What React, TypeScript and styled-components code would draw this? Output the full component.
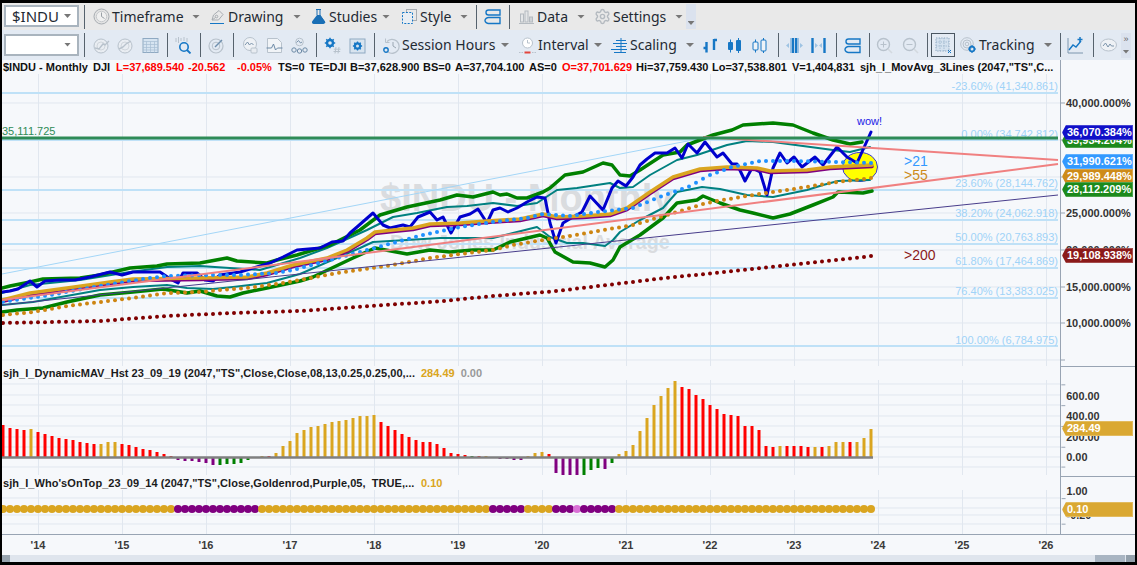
import React from "react";
import styled, { createGlobalStyle } from "styled-components";
import { Settings } from "lucide-react";

const GlobalStyle = createGlobalStyle`
  html, body { margin: 0; padding: 0; background: #000; }
  * { box-sizing: border-box; }
`;

type Pt = [number, number];

const GHOST = "#b8c2cc";
const BLUE = "#1677c5";

// page coordinates, the svg viewBoxes below line up with the page
const CLOSE: Pt[] = [[2,292],[10,291],[18,289],[30,281],[37,287],[45,281],[60,280],[75,280],[90,277],[110,272],[122,275],[133,272],[160,272],[172,280],[178,283],[183,273],[197,273],[205,280],[213,281],[220,275],[240,272],[270,263],[283,257],[297,250],[320,248],[332,242],[343,241],[350,233],[357,227],[373,213],[383,225],[390,228],[403,225],[410,227],[418,217],[430,212],[437,220],[443,217],[451,233],[460,217],[470,214],[478,209],[487,223],[493,210],[500,208],[508,212],[517,208],[527,202],[537,197],[545,198],[550,223],[556,243],[563,223],[573,217],[582,212],[590,196],[603,210],[612,188],[618,181],[626,186],[633,177],[640,165],[647,159],[655,153],[667,153],[675,148],[682,158],[688,144],[697,153],[705,142],[717,157],[723,153],[732,164],[737,164],[745,181],[752,168],[760,172],[767,195],[773,168],[780,153],[787,163],[794,157],[802,167],[815,157],[823,165],[837,147],[847,157],[857,163],[871,132]];
const GOLD: Pt[] = [[2,300],[30,293],[67,288],[110,282],[133,279],[200,278],[247,277],[267,273],[293,265],[327,258],[347,250],[367,238],[375,232],[393,230],[413,228],[430,224],[460,223],[487,221],[520,219],[543,214],[557,217],[583,216],[610,214],[627,208],[650,192],[673,177],[700,169],[727,167],[757,168],[770,171],[807,170],[830,167],[872,165]];
const GREEN_UP: Pt[] = [[2,288],[10,286],[30,282],[43,279],[80,278],[100,275],[130,268],[157,266],[167,264],[200,263],[227,258],[237,261],[267,263],[277,260],[297,255],[330,245],[360,230],[380,215],[407,207],[440,200],[457,195],[473,197],[493,192],[500,195],[507,194],[517,198],[527,198],[543,192],[550,188],[565,175],[583,172],[603,163],[612,165],[620,175],[630,176],[640,170],[663,155],[680,152],[687,145],[713,135],[732,130],[743,125],[757,124],[773,123],[793,125],[813,133],[833,140],[850,144],[862,142]];
const GREEN_LOW: Pt[] = [[2,312],[17,310],[43,308],[67,302],[100,295],[133,292],[163,289],[187,293],[200,291],[217,296],[230,297],[243,293],[267,288],[300,281],[313,277],[353,258],[375,248],[407,254],[430,250],[450,252],[473,250],[493,250],[510,242],[540,235],[547,238],[555,252],[573,262],[590,263],[605,267],[613,260],[620,247],[640,235],[663,218],[677,203],[697,200],[703,196],[720,203],[740,210],[753,213],[773,218],[790,214],[813,205],[833,197],[838,192],[863,193],[872,191]];
const TEAL_UP: Pt[] = [[2,293],[30,285],[80,280],[130,272],[167,267],[200,266],[260,270],[300,258],[327,248],[367,230],[393,217],[417,213],[447,207],[467,206],[493,203],[517,206],[537,203],[557,190],[577,188],[610,183],[620,188],[633,187],[650,175],[677,160],[697,155],[727,145],[747,141],[773,142],[803,146],[833,150],[850,152],[870,147]];
const TEAL_LOW: Pt[] = [[2,305],[33,302],[100,290],[133,287],[167,285],[187,288],[213,289],[233,287],[267,283],[300,274],[360,248],[373,242],[407,240],[440,238],[493,238],[513,233],[537,227],[550,237],[567,243],[583,243],[605,246],[613,240],[620,232],[640,220],[663,208],[677,192],[702,187],[720,189],[747,195],[773,197],[807,190],[823,185],[838,181],[870,180]];
const DOT_BLUE: Pt[] = [[2,302],[50,295],[100,286],[150,278],[167,276],[213,275],[240,275],[277,273],[297,269],[330,260],[360,252],[393,243],[423,235],[460,227],[493,222],[527,218],[543,214],[570,216],[598,212],[633,208],[662,196],[688,187],[710,175],[732,167],[760,161],[793,161],[837,162],[872,163]];
const DOT_ORANGE: Pt[] = [[3,315],[33,312],[67,306],[100,302],[133,298],[167,293],[200,292],[220,290],[247,288],[283,283],[300,280],[337,273],[373,268],[393,265],[430,258],[460,254],[493,250],[513,245],[543,240],[570,236],[598,231],[633,225],[667,215],[703,204],[717,201],[753,195],[800,188],[837,182],[872,178]];
const DOT_RED: Pt[] = [[3,323],[100,321],[167,316],[233,313],[300,311],[443,301],[493,296],[557,291],[657,279],[837,260],[872,256]];

const FIBS = [
  { y: 93, text: "-23.60% (41,340.861)", ty: 90 },
  { y: 140, text: "0.00% (34,742.812)", ty: 138 },
  { y: 190, text: "23.60% (28,144.762)", ty: 187 },
  { y: 220, text: "38.20% (24,062.918)", ty: 217 },
  { y: 244, text: "50.00% (20,763.893)", ty: 241 },
  { y: 268, text: "61.80% (17,464.869)", ty: 265 },
  { y: 298, text: "76.40% (13,383.025)", ty: 295 },
  { y: 346, text: "100.00% (6,784.975)", ty: 344 },
];
const PRICE_GRID = [103, 140, 177, 213, 250, 287, 323, 360];
const YEAR_X = [38, 122, 206, 290, 374, 458, 542, 626, 710, 794, 878, 962, 1046];
const YEARS = ["14", "15", "16", "17", "18", "19", "20", "21", "22", "23", "24", "25", "26"];

const HIST: [number, string][] = [
  [32,"r"],[29,"r"],[28,"r"],[27,"r"],[28,"g"],[25,"r"],[23,"r"],[21,"r"],[19,"r"],[18,"r"],[17,"r"],[15,"r"],[14,"r"],[13,"r"],[13,"g"],[15,"g"],[15,"g"],[13,"r"],[12,"r"],[10,"r"],[8,"r"],[7,"r"],[5,"r"],[3,"r"],[1,"r"],
  [-3,"p"],[-4,"p"],[-4,"p"],[-5,"p"],[-6,"p"],[-8,"p"],[-8,"e"],[-7,"e"],[-7,"e"],[-6,"e"],[-3,"e"],[-1,"e"],[1,"g"],[1,"r"],
  [4,"g"],[11,"g"],[16,"g"],[24,"g"],[27,"g"],[30,"g"],[31,"g"],[33,"g"],[35,"g"],[36,"g"],[37,"g"],[39,"g"],[41,"g"],[41,"g"],[42,"g"],
  [35,"r"],[31,"r"],[27,"r"],[23,"r"],[20,"r"],[17,"r"],[15,"r"],[15,"r"],[13,"r"],[9,"r"],[4,"r"],[3,"r"],[2,"r"],[1,"e"],[1,"r"],
  [1,"g"],[-1,"p"],[-2,"p"],[-2,"p"],[-3,"p"],[-3,"p"],[1,"g"],[4,"g"],[5,"g"],[3,"r"],[-16,"p"],[-18,"p"],[-18,"p"],[-18,"p"],[-18,"e"],[-13,"e"],[-11,"e"],[-12,"p"],[-6,"e"],
  [3,"g"],[6,"g"],[12,"g"],[26,"g"],[39,"g"],[52,"g"],[61,"g"],[69,"g"],[76,"g"],[70,"r"],[68,"r"],[62,"r"],[58,"r"],[52,"r"],[48,"r"],[43,"r"],[42,"r"],[41,"r"],[31,"r"],[31,"r"],[27,"r"],[11,"r"],[10,"r"],[11,"g"],[11,"r"],[11,"r"],[11,"r"],[10,"r"],[10,"g"],[10,"r"],[11,"g"],[15,"g"],[15,"g"],[15,"r"],[15,"g"],[19,"g"],[28,"g"],
];
const HIST_COLOR: Record<string, string> = { r: "#ff0000", g: "#daa520", p: "#800080", e: "#008000" };

const barX = (i: number) => 3 + i * 7;
const toPoints = (pts: Pt[]) => pts.map(p => p.join(",")).join(" ");

const valueAt = (pts: Pt[], x: number) => {
  for (let i = 1; i < pts.length; i++) {
    if (x <= pts[i][0]) {
      const [x0, y0] = pts[i - 1];
      const [x1, y1] = pts[i];
      return y0 + ((y1 - y0) * (x - x0)) / (x1 - x0);
    }
  }
  return pts[pts.length - 1][1];
};

const dotColor = (i: number) => {
  if ((i >= 25 && i <= 36) || (i >= 70 && i <= 74) || (i >= 79 && i <= 81) || (i >= 83 && i <= 87)) return "#800080";
  if (i === 82) return "#da70d6";
  return "#daa520";
};

const Frame = styled.div`
  width: 1137px;
  height: 565px;
  border-style: solid;
  border-color: #000;
  border-width: 3px 2px;
  display: flex;
  flex-direction: column;
  overflow: hidden;
  background: #f6f8fb;
  font-family: "Liberation Sans", Arial, sans-serif;
`;

const Toolbar = styled.div<{ $bg: string; $h: number }>`
  height: ${p => p.$h}px;
  flex: none;
  background: ${p => p.$bg};
  display: flex;
  align-items: center;
  padding-left: 2px;
  font-family: "Noto Sans", sans-serif;
  font-size: 14px;
  color: #1f2a33;
`;

const Combo = styled.div`
  width: 75px;
  height: 22px;
  border: 2px solid #a9b4be;
  background: #fff;
  display: flex;
  align-items: center;
  justify-content: space-between;
  padding: 0 6px 0 6px;
  font-size: 15px;
`;

const ComboWrap = styled.div`
  margin-top: -1px;
`;

const Sep = styled.div<{ $ml: number }>`
  width: 1px;
  height: 24px;
  margin-left: ${p => p.$ml}px;
  background: #56626d;
  flex: none;
`;

const Tool = styled.div<{ $ml: number }>`
  display: flex;
  align-items: center;
  flex: none;
  margin-left: ${p => p.$ml}px;
`;

const Label = styled.span<{ $w: number }>`
  width: ${p => p.$w}px;
  padding-left: 2px;
  white-space: nowrap;
  line-height: 20px;
`;

const Caret = styled.i`
  display: block;
  width: 8px;
  height: 4px;
  background: #777;
  clip-path: polygon(0 0, 100% 0, 50% 100%);
  flex: none;
`;

const SmallCaret = styled(Caret)`
  width: 7px;
`;

const Overflow = styled.div<{ $ml: number }>`
  width: 10px;
  height: 25px;
  margin-left: ${p => p.$ml}px;
  background: #dbe2ee;
  display: flex;
  flex-direction: column;
  align-items: center;
  justify-content: flex-end;
  padding-bottom: 4px;
  font-size: 9px;
  line-height: 9px;
  color: #666;
`;

const Chevrons = styled.span`
  margin-bottom: auto;
  margin-top: 2px;
  font-family: "Liberation Sans", sans-serif;
`;

const Selected = styled.div<{ $ml: number }>`
  width: 24px;
  height: 24px;
  margin-left: ${p => p.$ml}px;
  border: 1px solid #4a5661;
  background: #e4ebf4;
  display: flex;
  align-items: center;
  justify-content: center;
`;

const Glyph = styled.svg.attrs({ viewBox: "0 0 17 17" })`
  width: 17px;
  height: 17px;
  flex: none;
  display: block;
`;

const Pane = styled.div<{ $h: number }>`
  height: ${p => p.$h}px;
  flex: none;
  display: flex;
`;

const Plot = styled.div`
  width: 1058px;
  flex: none;
  display: flex;
  flex-direction: column;
  min-height: 0;
`;

const Legend = styled.div`
  height: 14px;
  flex: none;
  display: flex;
  align-items: center;
  padding-left: 1px;
  font-size: 11px;
  font-weight: 700;
  line-height: 14px;
  color: #1b1b1b;
  white-space: pre;
  overflow: hidden;
`;

const StudyName = styled.span<{ $w: number }>`
  width: ${p => p.$w}px;
  letter-spacing: 0.05px;
  flex: none;
`;

const Stat = styled.span<{ $w: number; $red?: boolean }>`
  width: ${p => p.$w}px;
  flex: none;
  color: ${p => (p.$red ? "#ff0000" : "#111")};
`;

const Value = styled.span<{ $ml: number; $color: string }>`
  margin-left: ${p => p.$ml}px;
  color: ${p => p.$color};
`;

const ChartSvg = styled.svg`
  display: block;
  flex: 1;
  width: 1058px;
  min-height: 0;
`;

const Axis = styled.div<{ $top?: boolean }>`
  width: 75px;
  flex: none;
  position: relative;
  border-left: 1px solid #98a4b3;
  border-top: ${p => (p.$top ? "1px solid #98a4b3" : "none")};
`;

const AxisSvg = styled.svg`
  display: block;
  width: 74px;
  height: 100%;
`;

const Tag = styled.div<{ $y: number; $bg: string }>`
  position: absolute;
  left: 1px;
  top: ${p => p.$y}px;
  width: 71px;
  height: 15px;
  padding-left: 5px;
  background: ${p => p.$bg};
  clip-path: polygon(4px 0, 100% 0, 100% 100%, 4px 100%, 0 50%);
  box-shadow: inset 0 0 0 1px rgba(255, 255, 255, 0.22);
  color: #fff;
  font-size: 11px;
  font-weight: 700;
  line-height: 15px;
  white-space: nowrap;
`;

const TimeAxis = styled.div`
  height: 21px;
  flex: none;
  border-top: 1px solid #98a4b3;
  display: grid;
  grid-template-columns: repeat(13, 72px);
  column-gap: 12px;
  align-items: center;
  font-size: 11px;
  font-weight: 700;
  color: #3a3a3a;
`;

const Year = styled.span`
  text-align: center;
`;

const Scrollbar = styled.div`
  height: 7px;
  flex: none;
  background: #dfe5ed;
  display: flex;
`;

const Thumb = styled.div<{ $w: number; $ml?: number; $bg: string }>`
  width: ${p => p.$w}px;
  margin-left: ${p => p.$ml ?? 0}px;
  background: ${p => p.$bg};
`;

const AxisText = styled.text`
  font-family: "Liberation Sans", sans-serif;
  font-size: 11px;
  font-weight: 700;
  fill: #333;
`;

const FibText = styled.text`
  font-family: "Liberation Sans", sans-serif;
  font-size: 11px;
  fill: #9fd3f8;
  text-anchor: end;
`;

const Note = styled.text<{ $color: string }>`
  font-family: "Liberation Sans", sans-serif;
  font-size: 14px;
  fill: ${p => p.$color};
`;

const Watermark = styled.text<{ $size: number }>`
  font-family: "Liberation Sans", sans-serif;
  font-weight: 700;
  font-size: ${p => p.$size}px;
  fill: #dadcdf;
`;

/* toolbar icons */
const Clock = () => (
  <Glyph><circle cx="8.5" cy="8.5" r="7.5" fill="#e4e4e4" stroke="#a8adb2" /><circle cx="8.5" cy="8.5" r="5.2" fill="#f0f0f0" stroke="#c6c9cc" /><path d="M8.5 4.5v4l3 2" fill="none" stroke="#9aa0a6" /></Glyph>
);
const Pen = () => (
  <Glyph><path d="M3 12l1.5-5L10 2.5l4 4L9.5 12z" fill="none" stroke="#a8adb2" /><circle cx="7.5" cy="8.5" r="1.3" fill="none" stroke="#a8adb2" /><path d="M3 12l3.5-2.5" stroke="#a8adb2" /><path d="M1 15.5h14" stroke={BLUE} /></Glyph>
);
const Flask = () => (
  <Glyph><path d="M6 1.5h5M7 1.5v5.5M10 1.5v5.5L15 14.5" fill="none" stroke="#1a6fb5" /><path d="M7 7L2.4 13a1.8 1.8 0 0 0 1.4 3h9.4a1.8 1.8 0 0 0 1.4-3L10 7z" fill="#1a6fb5" /></Glyph>
);
const StyleBox = () => (
  <Glyph><rect x="5.5" y="1.5" width="10" height="11" fill="none" stroke="#a8adb2" /><rect x="1.5" y="4.5" width="10" height="11" fill="#e9eef3" stroke={BLUE} strokeDasharray="2 1.4" /></Glyph>
);
const Panels = () => (
  <Glyph><path d="M16 2H4.5C3 2 2 3 2 4.5S3 7 4.5 7H16V2zM16 9.5H4.5C3 9.5 1 10.8 1 12.5S3 15.5 4.5 15.5H16v-6z" fill="none" stroke={BLUE} strokeWidth="1.4" /></Glyph>
);
const DataBars = () => (
  <Glyph><path d="M1 15.5h15" stroke="#b4bac0" /><rect x="2.5" y="6" width="3" height="8" fill="#e4e6e8" stroke="#b4bac0" /><rect x="7" y="3" width="3" height="11" fill="#e4e6e8" stroke="#b4bac0" /><rect x="11.5" y="9" width="3" height="5" fill="#cfd3d7" stroke="#b4bac0" /></Glyph>
);
const TrendCircle = ({ rev }: { rev?: boolean }) => (
  <Glyph><circle cx="8" cy="9" r="7" fill="#e9edf2" stroke={GHOST} /><circle cx="8" cy="9" r="4" fill="none" stroke="#d0d6dc" /><path d={rev ? "M2 12l4-2 3-3 5-3" : "M2 11l4 1 4-5 2 1 4-4"} fill="none" stroke={GHOST} strokeWidth="1.4" /></Glyph>
);
const CalendarGrid = () => (
  <Glyph><rect x="1" y="1.5" width="15" height="14" fill="#d6e4f1" stroke="#8fa9c2" /><path d="M1 4.5h15M1 7.5h15M1 10.5h15M1 13h15M4.5 4.5v11M8.5 4.5v11M12.5 4.5v11" stroke="#a6bdd2" strokeWidth=".7" /></Glyph>
);
const SearchBars = () => (
  <Glyph><path d="M1 5V1M3.5 6V0M6 4V1M9 4V0M12 5V1" stroke={GHOST} /><circle cx="9" cy="10" r="4.2" fill="none" stroke={BLUE} strokeWidth="1.6" /><path d="M12 13l3.5 3.5" stroke={BLUE} strokeWidth="1.8" /></Glyph>
);
const Radar = () => (
  <Glyph><circle cx="8" cy="9" r="7" fill="none" stroke={GHOST} strokeWidth="1.2" /><circle cx="8" cy="9" r="3.8" fill="none" stroke={GHOST} /><path d="M7 10l7-7" stroke="#6f8fae" strokeWidth="1.5" /></Glyph>
);
const WaveBubble = () => (
  <Glyph><circle cx="8" cy="7" r="6.5" fill="#eef1f5" stroke={GHOST} /><path d="M3 8l2.5-3 2 3 2-2 2 2" fill="none" stroke="#7a93ab" /><rect x="9" y="11" width="6" height="5" rx="1" fill="#e8ecf1" stroke={GHOST} /></Glyph>
);
const ChartFrame = () => (
  <Glyph><path d="M1.5 1.5h10l4 4v10h-14z" fill="#f1f4f7" stroke={GHOST} /><path d="M0.5 11h5l2-4 2 6 2-2h5" fill="none" stroke="#6c8aa6" /></Glyph>
);
const Nodes = () => (
  <Glyph><circle cx="8.5" cy="5" r="3.8" fill="none" stroke={GHOST} /><path d="M5.5 5.5l2-2 2 2.5 1.5-1" fill="none" stroke="#7a93ab" /><circle cx="3" cy="13" r="2.2" fill="none" stroke="#6c8aa6" /><circle cx="8.5" cy="14" r="2.2" fill="none" stroke="#6c8aa6" /><circle cx="14" cy="13" r="2.2" fill="none" stroke="#6c8aa6" /></Glyph>
);
const GearHash = () => (
  <Glyph><circle cx="6" cy="6" r="3" fill="none" stroke={BLUE} strokeWidth="2.4" /><path d="M6 .8v2M6 9.2v2M.8 6h2M9.2 6h2M2.3 2.3l1.4 1.4M8.3 8.3l1.4 1.4M2.3 9.7l1.4-1.4M8.3 3.7l1.4-1.4" stroke={BLUE} strokeWidth="1.5" /><path d="M12 10l-1 6.5M15 10l-1 6.5M9.8 12.2h6.7M9.5 14.5h6.7" stroke={GHOST} /></Glyph>
);
const GearBox = () => (
  <Glyph><rect x="1" y="2" width="15" height="14" fill="#d8e4ef" stroke="#8fa9c2" /><circle cx="8.5" cy="9" r="2.6" fill="none" stroke={BLUE} strokeWidth="2.2" /><path d="M8.5 4.4v1.6M8.5 12v1.6M3.9 9h1.6M11.5 9h1.6M5.2 5.7l1.1 1.1M10.7 11.2l1.1 1.1M5.2 12.3l1.1-1.1M10.7 6.8l1.1-1.1" stroke={BLUE} strokeWidth="1.3" /></Glyph>
);
const History = () => (
  <Glyph><path d="M4 4.5A7 7 0 1 1 5 15" fill="none" stroke={GHOST} strokeWidth="1.3" /><path d="M2.5 1.5v4h4" fill="none" stroke={GHOST} /><path d="M10 5v4l3 2" fill="none" stroke="#9aa6b2" /><circle cx="3" cy="13" r="2.2" fill="none" stroke={BLUE} strokeWidth="1.4" /></Glyph>
);
const Interval = () => (
  <Glyph><circle cx="8.5" cy="6" r="5" fill="#fff" stroke={GHOST} /><path d="M8.5 3v3h2.5" fill="none" stroke={GHOST} /><path d="M0 15.5h4M13 15.5h4" stroke={GHOST} strokeDasharray="1.5 1" /><path d="M5.5 15.5h6" stroke="#e2453c" strokeWidth="2" /></Glyph>
);
const Scaling = () => (
  <Glyph><path d="M10 1v15M5 3.5h10M2 6.5h14M5 9.5h10M0 12.5h16M3 15.5h12" stroke={BLUE} /></Glyph>
);
const BarsUp = () => (
  <Glyph><path d="M4.5 5v10.5M1.5 11h3M12 2v11M12 3h3" fill="none" stroke={BLUE} strokeWidth="2.4" /></Glyph>
);
const CandlesSolid = () => (
  <Glyph><path d="M4.5 2.5v13M12.5 1v15" stroke={BLUE} /><rect x="2" y="5" width="5" height="8" rx="1" fill={BLUE} /><rect x="10" y="3" width="5" height="11" rx="1" fill={BLUE} /></Glyph>
);
const CandlesHollow = () => (
  <Glyph><path d="M4.5 2.5V5M4.5 13v2.5M12.5 1v2M12.5 14v2" stroke={BLUE} /><rect x="2" y="5" width="5" height="8" rx="1" fill="#eef3f8" stroke={BLUE} /><rect x="10" y="3" width="5" height="11" rx="1" fill="#eef3f8" stroke={BLUE} /></Glyph>
);
const Shrink = () => (
  <Glyph><path d="M7 1v15M10 1v15" stroke={BLUE} strokeWidth="2.2" /><path d="M5 1v15M12 1v15" stroke={BLUE} strokeWidth=".7" /><path d="M3 6L0 8.5 3 11zM14 6l3 2.5-3 2.5z" fill="#9ec3e3" /></Glyph>
);
const Expand = () => (
  <Glyph><path d="M2.5 1v15M14.5 1v15" stroke={BLUE} strokeWidth="2.4" /><path d="M5 6l3 2.5L5 11zM12 6L9 8.5l3 2.5z" fill="#9ec3e3" /></Glyph>
);
const ZoomMark = ({ plus }: { plus?: boolean }) => (
  <Glyph><circle cx="7.5" cy="7.5" r="6" fill="none" stroke={GHOST} strokeWidth="1.4" /><path d={plus ? "M4.5 7.5h6M7.5 4.5v6" : "M4.5 7.5h6"} stroke={GHOST} /><path d="M12 12l4 4" stroke="#d3d9df" strokeWidth="1.6" /></Glyph>
);
const DotGrid = () => (
  <Glyph><rect x="1" y="1" width="13" height="13" fill="#d5e2ef" stroke="#8fa9c2" strokeDasharray="1.4 1.2" /><path d="M1 5h13M1 9h13M5 1v13M9 1v13" stroke="#9db5cc" strokeDasharray="1.2 1.2" /><path d="M13 13l3 3M16 13l-3 3" stroke={BLUE} /></Glyph>
);
const TrackingIcon = () => (
  <Glyph><circle cx="7" cy="7" r="6.3" fill="none" stroke={GHOST} /><circle cx="7" cy="7" r="4" fill="none" stroke={GHOST} /><circle cx="7" cy="7" r="1.8" fill="none" stroke={GHOST} /><circle cx="12" cy="12" r="2.4" fill="none" stroke={BLUE} strokeWidth="1.8" /><path d="M12 8v1.4M12 14.6V16M8 12h1.4M14.6 12H16" stroke={BLUE} strokeWidth="1.2" /></Glyph>
);
const AddChart = () => (
  <Glyph><path d="M1 1v15h15" fill="none" stroke="#7d96ae" /><path d="M2 13l4-5 3 2 5-6" fill="none" stroke={BLUE} strokeWidth="1.4" /><path d="M13 0v5M10.5 2.5h5" stroke={BLUE} strokeWidth="1.5" /></Glyph>
);
const WaveOval = () => (
  <Glyph><ellipse cx="8.5" cy="8" rx="8" ry="6" fill="#eef1f5" stroke={GHOST} /><path d="M3 9l2.5-3 2.5 4 2-3 1.5 2H14" fill="none" stroke="#7a93ab" /></Glyph>
);

const line = (pts: Pt[], color: string, width: number) => (
  <polyline points={toPoints(pts)} fill="none" stroke={color} strokeWidth={width} strokeLinejoin="round" strokeLinecap="round" />
);

const dots = (pts: Pt[], color: string, r: number) =>
  HIST.map((_, i) => <circle key={i} cx={barX(i)} cy={valueAt(pts, barX(i))} r={r} fill={color} />);

const Ticks = ({ ys }: { ys: number[] }) => (
  <>{ys.map(y => <line key={y} x1="0" x2="4" y1={y} y2={y} stroke="#98a4b3" />)}</>
);

const Grid = ({ ys, top, bottom }: { ys: number[]; top: number; bottom: number }) => (
  <>
    {ys.map(y => <line key={y} x1="2" x2="1060" y1={y} y2={y} stroke="#e1e7ef" strokeWidth="1" />)}
    {YEAR_X.map(x => <line key={x} x1={x + 0.5} x2={x + 0.5} y1={top} y2={bottom} stroke="#e1e7ef" strokeWidth="1" />)}
  </>
);

export default function App() {
  return (
    <Frame>
      <GlobalStyle />
      <Toolbar $bg="#e9e9e9" $h={27}>
        <ComboWrap><Combo>$INDU<SmallCaret /></Combo></ComboWrap>
        <Sep $ml={5} />
        <Tool $ml={8}><Clock /><Label $w={82}>Timeframe</Label><Caret /></Tool>
        <Tool $ml={9}><Pen /><Label $w={67}>Drawing</Label><Caret /></Tool>
        <Tool $ml={9}><Flask /><Label $w={55}>Studies</Label><Caret /></Tool>
        <Tool $ml={11}><StyleBox /><Label $w={42}>Style</Label><Caret /></Tool>
        <Sep $ml={8} />
        <Tool $ml={7}><Panels /></Tool>
        <Sep $ml={8} />
        <Tool $ml={8}><DataBars /><Label $w={42}>Data</Label><Caret /></Tool>
        <Tool $ml={9}><Settings size={17} color="#b4bac0" /><Label $w={64}>Settings</Label><Caret /></Tool>
        <Overflow $ml={3}><SmallCaret /></Overflow>
      </Toolbar>
      <Toolbar $bg="#e3eaf3" $h={30}>
        <ComboWrap><Combo><span /><SmallCaret /></Combo></ComboWrap>
        <Sep $ml={5} />
        <Tool $ml={8}><TrendCircle /></Tool>
        <Tool $ml={7}><TrendCircle rev /></Tool>
        <Tool $ml={8}><CalendarGrid /></Tool>
        <Sep $ml={8} />
        <Tool $ml={7}><SearchBars /></Tool>
        <Sep $ml={8} />
        <Tool $ml={7}><Radar /></Tool>
        <Sep $ml={8} />
        <Tool $ml={8}><WaveBubble /></Tool>
        <Tool $ml={7}><ChartFrame /></Tool>
        <Tool $ml={8}><Nodes /></Tool>
        <Sep $ml={8} />
        <Tool $ml={7}><GearHash /></Tool>
        <Tool $ml={8}><GearBox /></Tool>
        <Sep $ml={8} />
        <Tool $ml={8}><History /><Label $w={101}>Session Hours</Label><Caret /></Tool>
        <Tool $ml={10}><Interval /><Label $w={58}>Interval</Label><Caret /></Tool>
        <Tool $ml={9}><Scaling /><Label $w={58}>Scaling</Label><Caret /></Tool>
        <Tool $ml={8}><BarsUp /></Tool>
        <Tool $ml={7}><CandlesSolid /></Tool>
        <Tool $ml={8}><CandlesHollow /></Tool>
        <Sep $ml={10} />
        <Tool $ml={7}><Shrink /></Tool>
        <Tool $ml={7}><Expand /></Tool>
        <Sep $ml={9} />
        <Tool $ml={7}><Panels /></Tool>
        <Sep $ml={8} />
        <Tool $ml={6}><ZoomMark plus /></Tool>
        <Tool $ml={9}><ZoomMark /></Tool>
        <Sep $ml={8} />
        <Selected $ml={3}><DotGrid /></Selected>
        <Tool $ml={5}><TrackingIcon /><Label $w={67}>Tracking</Label><Caret /></Tool>
        <Sep $ml={8} />
        <Tool $ml={6}><AddChart /></Tool>
        <Sep $ml={9} />
        <Tool $ml={6}><WaveOval /></Tool>
        <Overflow $ml={4}><Chevrons>»</Chevrons><SmallCaret /></Overflow>
      </Toolbar>

      <Pane $h={306}>
        <Plot>
          <Legend>
            <Stat $w={90}>$INDU - Monthly</Stat>
            <Stat $w={23}>DJI</Stat>
            <Stat $w={72} $red>L=37,689.540</Stat>
            <Stat $w={49} $red>-20.562</Stat>
            <Stat $w={41} $red>-0.05%</Stat>
            <Stat $w={31}>TS=0</Stat>
            <Stat $w={41}>TE=DJI</Stat>
            <Stat $w={73}>B=37,628.900</Stat>
            <Stat $w={32}>BS=0</Stat>
            <Stat $w={74}>A=37,704.100</Stat>
            <Stat $w={33}>AS=0</Stat>
            <Stat $w={74} $red>O=37,701.629</Stat>
            <Stat $w={76}>Hi=37,759.430</Stat>
            <Stat $w={80}>Lo=37,538.801</Stat>
            <Stat $w={68}>V=1,404,831</Stat>
            <Stat $w={199}>sjh_I_MovAvg_3Lines (2047,"TS",C...</Stat>
          </Legend>
          <ChartSvg viewBox="2 74 1058 292">
            <Grid ys={PRICE_GRID} top={74} bottom={366} />
            <Watermark $size={38} x="380" y="211">$INDU - Monthly</Watermark>
            <Watermark $size={19.7} x="390" y="249">Dow Jones Industrial Average</Watermark>
            {FIBS.map(f => (
              <g key={f.y}>
                <line x1="2" x2="1058" y1={f.y} y2={f.y} stroke="#bfe1f7" strokeWidth="2" />
                <FibText x="1058" y={f.ty}>{f.text}</FibText>
              </g>
            ))}
            <line x1="2" y1="274" x2="703" y2="138" stroke="#a3d6f7" strokeWidth="1" />
            <ellipse cx="860" cy="167" rx="17.5" ry="14.5" fill="#ffff00" stroke="#3a3ad0" strokeWidth="1" />
            {line(TEAL_UP, "#008080", 2)}
            {line(TEAL_LOW, "#008080", 2)}
            {line(GREEN_UP, "#008000", 3.5)}
            {line(GREEN_LOW, "#008000", 3.5)}
            {line(CLOSE, "#0000cd", 3)}
            {line(GOLD.map(([x, y]) => [x, y + 1.5] as Pt), "#800080", 3.5)}
            {line(GOLD, "#daa520", 3.5)}
            {dots(DOT_BLUE, "#1e90ff", 2)}
            {dots(DOT_ORANGE, "#cd8512", 2)}
            {dots(DOT_RED, "#800000", 2)}
            <line x1="2" y1="305" x2="1058" y2="195" stroke="#483d8b" strokeWidth="1" />
            <line x1="2" y1="300" x2="1058" y2="164" stroke="#f08080" strokeWidth="2" />
            <line x1="703" y1="137" x2="1058" y2="160" stroke="#f08080" strokeWidth="2" />
            <line x1="2" x2="1058" y1="138" y2="138" stroke="#2e8b57" strokeWidth="3" />
            <text x="2" y="135" fontSize="11" fontFamily="Liberation Sans" fill="#2e8b57">35,111.725</text>
            <text x="857" y="125" fontSize="11" fontFamily="Liberation Sans" fill="#1a1ae6">wow!</text>
            <Note $color="#3399ff" x="904" y="166">&gt;21</Note>
            <Note $color="#cd8b1a" x="904" y="180">&gt;55</Note>
            <Note $color="#8b1a1a" x="904" y="260">&gt;200</Note>
          </ChartSvg>
        </Plot>
        <Axis>
          <AxisSvg viewBox="0 60 74 306">
            <Ticks ys={PRICE_GRID} />
            <AxisText x="5" y="107">40,000.000%</AxisText>
            <AxisText x="5" y="217">25,000.000%</AxisText>
            <AxisText x="5" y="254">20,000.000%</AxisText>
            <AxisText x="5" y="291">15,000.000%</AxisText>
            <AxisText x="5" y="327">10,000.000%</AxisText>
          </AxisSvg>
          <Tag $y={73} $bg="#1c8a1c">35,934.204%</Tag>
          <Tag $y={65} $bg="#1010c8">36,070.384%</Tag>
          <Tag $y={94} $bg="#3399ff">31,990.621%</Tag>
          <Tag $y={109} $bg="#cd8b1a">29,989.448%</Tag>
          <Tag $y={122} $bg="#1c8a1c">28,112.209%</Tag>
          <Tag $y={188} $bg="#8b1a1a">19,108.938%</Tag>
        </Axis>
      </Pane>

      <Pane $h={110}>
        <Plot>
          <Legend>
            <StudyName $w={417}>sjh_I_DynamicMAV_Hst 23_09_19 (2047,"TS",Close,Close,08,13,0.25,0.25,00,...</StudyName>
            <Value $ml={1} $color="#daa520">284.49</Value>
            <Value $ml={6} $color="#999">0.00</Value>
          </Legend>
          <ChartSvg viewBox="2 380 1058 96">
            <Grid ys={[384, 395, 405, 416, 426, 437, 447, 457, 467]} top={380} bottom={475} />
            {HIST.map(([h, c], i) => (
              <rect key={i} x={barX(i) - 1.5} y={h > 0 ? 457 - h : 457} width="3" height={Math.abs(h)} fill={HIST_COLOR[c]} />
            ))}
            <line x1="2" x2="873" y1="457.5" y2="457.5" stroke="#808080" strokeWidth="2.5" />
          </ChartSvg>
        </Plot>
        <Axis $top>
          <AxisSvg viewBox="0 366 74 110">
            <Ticks ys={[384, 405, 426, 447, 467]} />
            <AxisText x="5" y="399">600.00</AxisText>
            <AxisText x="5" y="420">400.00</AxisText>
            <AxisText x="5" y="441">200.00</AxisText>
            <AxisText x="5" y="461">0.00</AxisText>
          </AxisSvg>
          <Tag $y={54} $bg="#daa832">284.49</Tag>
        </Axis>
      </Pane>

      <Pane $h={58}>
        <Plot>
          <Legend>
            <StudyName $w={417}>sjh_I_Who'sOnTop_23_09_14 (2047,"TS",Close,Goldenrod,Purple,05,  TRUE,...</StudyName>
            <Value $ml={1} $color="#daa520">0.10</Value>
          </Legend>
          <ChartSvg viewBox="2 490 1058 44">
            <Grid ys={[498, 508, 515, 524]} top={490} bottom={534} />
            {HIST.map((_, i) => <circle key={i} cx={barX(i)} cy="509" r="4" fill={dotColor(i)} />)}
          </ChartSvg>
        </Plot>
        <Axis $top>
          <AxisSvg viewBox="0 476 74 58">
            <Ticks ys={[498, 524]} />
            <AxisText x="5" y="494">1.00</AxisText>
            <AxisText x="5" y="519">-0.20</AxisText>
          </AxisSvg>
          <Tag $y={25} $bg="#daa832">0.10</Tag>
        </Axis>
      </Pane>

      <TimeAxis>
        {YEARS.map(y => <Year key={y}>'{y}</Year>)}
      </TimeAxis>
      <Scrollbar>
        <Thumb $w={8} $bg="#97a3ae" />
        <Thumb $w={31} $ml={1085} $bg="#a9b5c2" />
        <Thumb $w={9} $ml={1} $bg="#93a0ab" />
      </Scrollbar>
    </Frame>
  );
}
